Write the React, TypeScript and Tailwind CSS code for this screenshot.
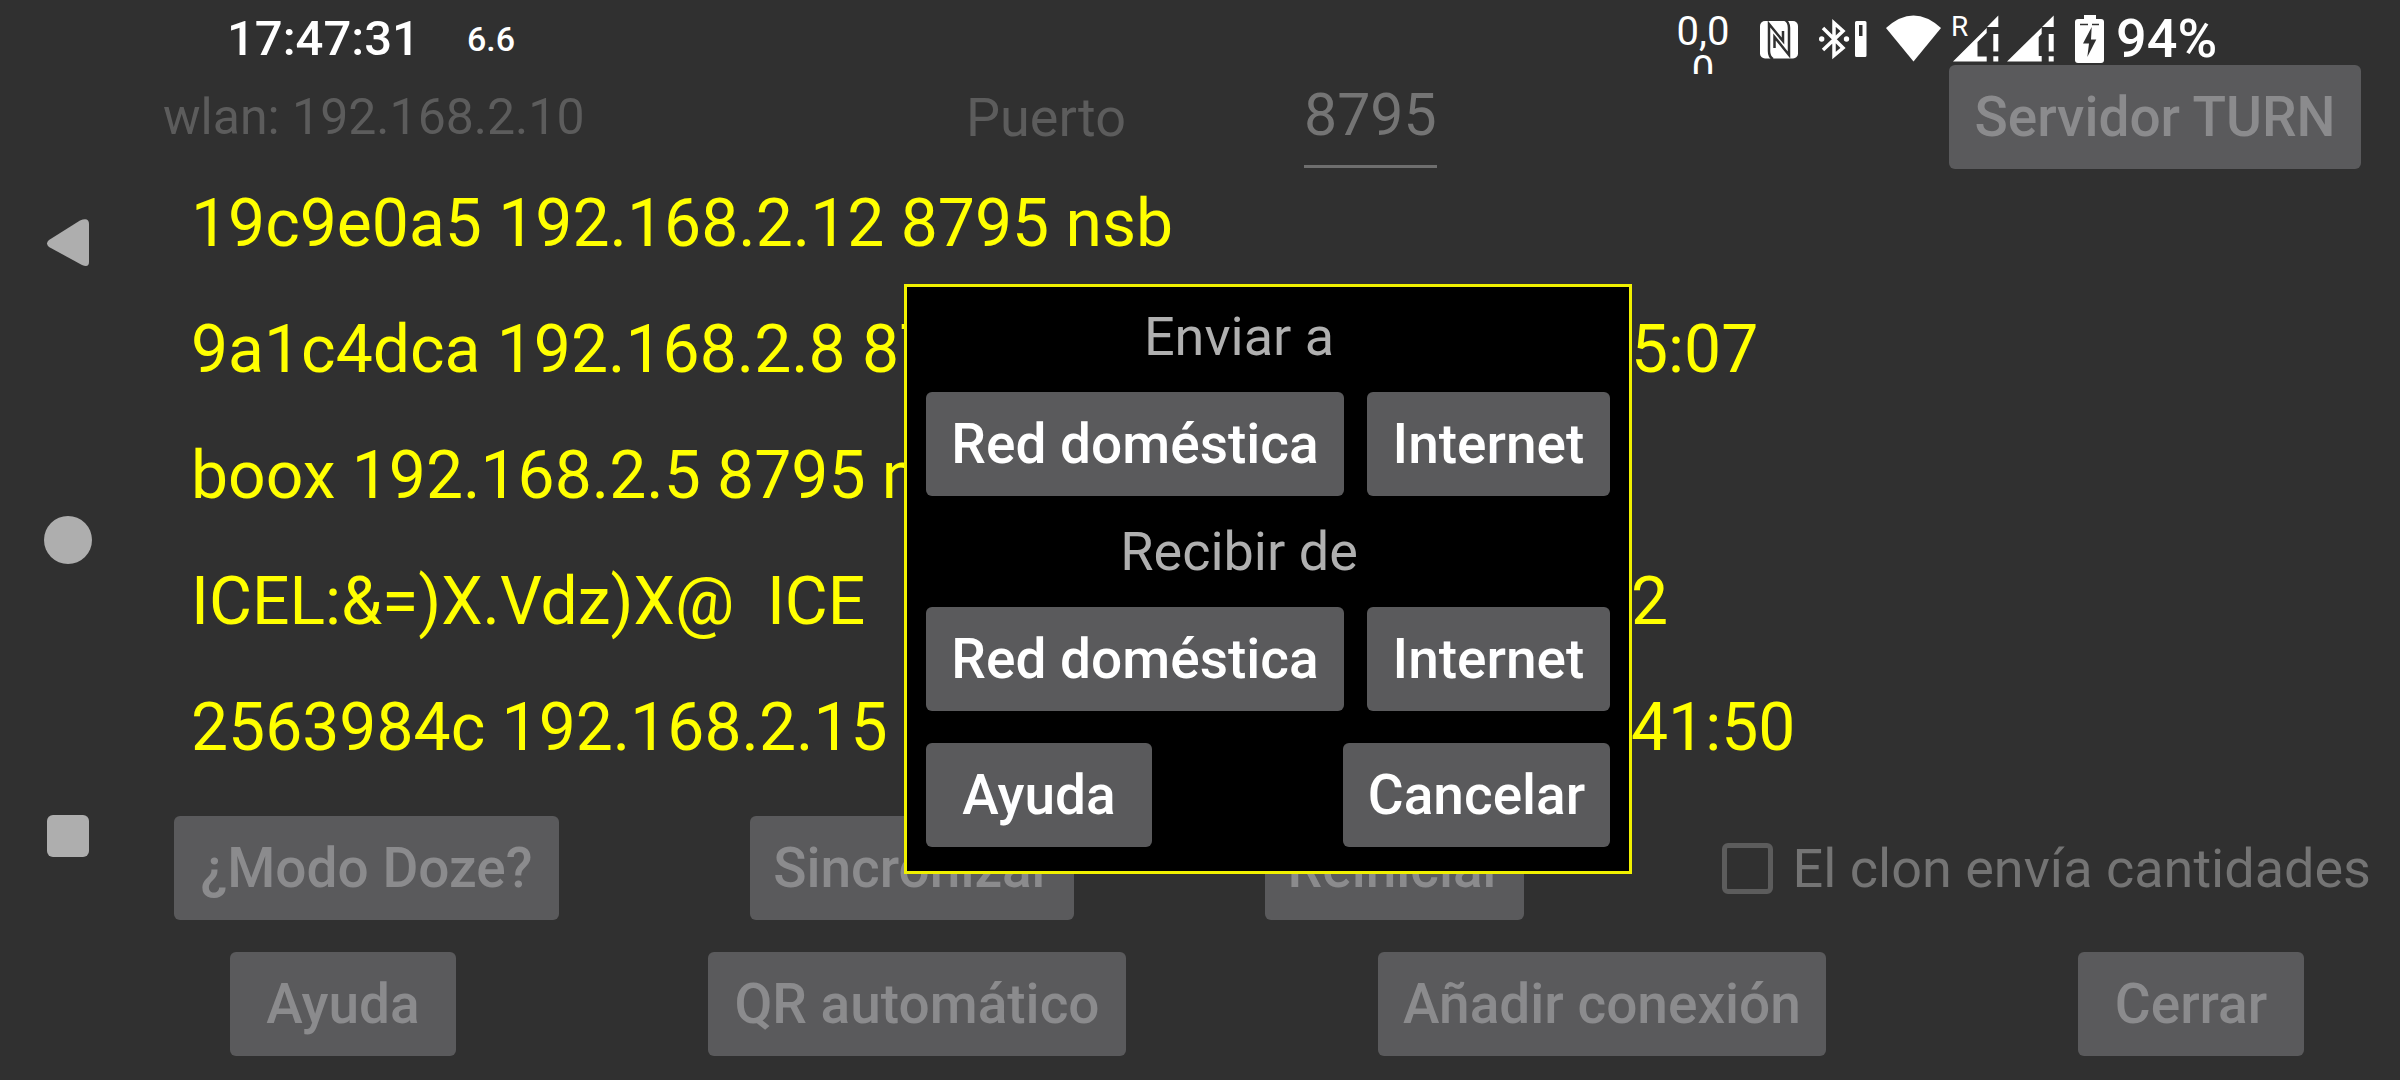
import type { ReactNode } from 'react'

interface ButtonProps {
  children: ReactNode
  className?: string
}

function MutedButton({ children, className = '' }: ButtonProps) {
  return (
    <button
      type="button"
      className={`h-[104px] shrink-0 rounded-md bg-[#5a5a5c] text-center text-[55px] font-medium whitespace-nowrap text-[#8b8b8d] ${className}`}
    >
      {children}
    </button>
  )
}

function DialogButton({ children, className = '' }: ButtonProps) {
  return (
    <button
      type="button"
      className={`h-[104px] shrink-0 rounded-md bg-[#5a5a5c] text-center text-[55px] font-medium whitespace-nowrap text-white ${className}`}
    >
      {children}
    </button>
  )
}

const hosts = [
  { name: '19c9e0a5 192.168.2.12 8795 nsb', time: '' },
  { name: '9a1c4dca 192.168.2.8 8795', time: '5:07' },
  { name: 'boox 192.168.2.5 8795 nsb', time: '' },
  { name: 'ICEL:&=)X.Vdz)X@  ICE', time: '2' },
  { name: '2563984c 192.168.2.15 8', time: '41:50' },
]

function NavigationBar() {
  return (
    <nav className="w-[136px] shrink-0">
      <div className="flex h-screen flex-col items-start justify-between pt-[216px] pb-[217px] pl-[44px]">
        <button type="button" aria-label="Atrás">
          <svg width="48" height="54" viewBox="0 0 48 54" fill="#aeaeae">
            <path d="M5 24 L36 4.500 Q45 1 45 8 V46 Q45 52 38 49 L5 31 Q1 27.500 5 24Z" />
          </svg>
        </button>
        <button type="button" aria-label="Inicio" className="my-[3px] size-[48px] rounded-full bg-[#aeaeae]" />
        <button type="button" aria-label="Recientes" className="my-[6px] ml-[3px] size-[42px] rounded-md bg-[#aeaeae]" />
      </div>
    </nav>
  )
}

function StatusIcons() {
  return (
    <>
      {/* NFC */}
      <svg className="ml-[28px] shrink-0" width="38" height="65" viewBox="0 0 38 65" fill="white">
        <rect y="21" width="38" height="37.500" rx="5" />
        <path
          d="M13 59 Q9 57 9 51 V24 L23 41 V31 M25 20 Q29 22 29 28 V55 L14.500 37 V48"
          fill="none"
          stroke="#303030"
          strokeWidth="2.500"
        />
      </svg>
      {/* Bluetooth with the battery of the device */}
      <svg className="ml-[21px] shrink-0" width="48" height="65" viewBox="0 0 48 65" fill="white">
        <path d="M4 28 L24 48 L15 55.500 V23 L24 31 L4 50" fill="none" stroke="white" strokeWidth="3.500" />
        <circle cx="2.700" cy="39" r="2.700" />
        <circle cx="27.500" cy="39" r="2.700" />
        <path fillRule="evenodd" d="M37.500 21 H46 Q47.500 21 47.500 22.500 V55.500 Q47.500 57 46 57 H37.500 Q36 57 36 55.500 V22.500 Q36 21 37.500 21Z M40 25 V36 H43.500 V25Z" />
      </svg>
      {/* Wi-Fi */}
      <svg className="ml-[19px] shrink-0" width="55" height="65" viewBox="0 0 55 65" fill="white">
        <path d="M0 28 Q27.500 3 55 28 L27.500 61.500Z" />
      </svg>
      {/* SIM 1, roaming */}
      <div className="relative ml-[10px] shrink-0">
        <span className="absolute top-[13px] left-0 text-[28px] leading-[28px] font-normal">R</span>
        <svg width="48" height="65" viewBox="0 0 48 65" fill="white">
          <path d="M2 61.500 L35.700 28 V33 L26.500 42 V56.500 H35.700 V61.500Z" />
          <path d="M36 27 L47.300 15.500 V27Z M42.300 34 H47.300 V51.500 H42.300Z M42.300 56.300 H47.300 V61.500 H42.300Z" />
        </svg>
      </div>
      {/* SIM 2 */}
      <svg className="ml-[8px] shrink-0" width="48" height="65" viewBox="0 0 48 65" fill="white">
        <path d="M0 61.500 L34.700 27.500 V34 L31.700 37 V56 H34.700 V61.500Z" />
        <path d="M35 27 L46.700 15.500 V27Z M41.700 34 H46.700 V51.500 H41.700Z M41.700 56.300 H46.700 V61.500 H41.700Z" />
      </svg>
      {/* Charging */}
      <svg className="ml-[20px] shrink-0" width="29" height="65" viewBox="0 0 29 65" fill="white">
        <rect y="19" width="29" height="44" rx="3" />
        <rect x="9" y="15" width="12" height="6" />
        <path d="M5 24.500 H13 M17 24.500 H24" stroke="#303030" strokeWidth="1.500" />
        <path d="M16.700 27 L8 43.500 H14 L12.300 57 L21.300 39.500 H16Z" fill="#303030" />
      </svg>
    </>
  )
}

export default function App() {
  return (
    <div className="flex min-h-screen bg-[#303030] font-[Roboto,sans-serif] text-[#5c5c5c]">
      <NavigationBar />
      <main className="relative flex min-w-0 flex-1 flex-col">
        <header className="flex h-[65px] items-start pr-[182px] pl-[91px] font-medium text-white">
          <time className="w-[240px] pt-[9px] text-[49px] leading-[60px]">17:47:31</time>
          <span className="pt-[9px] text-[34px] leading-[60px]">6.6</span>
          <div className="ml-auto flex items-start">
            {/* Second line of the counter is clipped by the bar */}
            <span className="h-[74px] w-[58px] overflow-hidden pt-[12px] text-center text-[40px] leading-[39px] font-normal">
              0,0 0
            </span>
            <StatusIcons />
            <span className="ml-[12px] w-[102px] pt-[9px] text-[54px] leading-[60px] font-medium">94%</span>
          </div>
        </header>

        {/* Connection settings */}
        <section className="grid h-[104px] grid-cols-[803fr_338fr_645fr_412fr] items-center pr-[39px] pl-[27px]">
          <span className="text-[50px]">wlan: 192.168.2.10</span>
          <label htmlFor="port" className="text-[54px]">Puerto</label>
          <input id="port" defaultValue="8795" className="h-[102px] w-[133px] border-b-3 border-[#6e6e6e] bg-transparent pb-[2px] text-[59px] text-[#747474] outline-none" />
          <MutedButton className="w-full">Servidor TURN</MutedButton>
        </section>

        <ul className="-mt-[9px] flex flex-col pl-[55px] text-[66px] text-[#ffff00]">
          {hosts.map((host) => (
            <li key={host.name} className="grid h-[126px] grid-cols-[1440px_1fr] items-center whitespace-pre">
              <span>{host.name}</span>
              <span>{host.time}</span>
            </li>
          ))}
        </ul>

        {/* Actions */}
        <div className="mt-[26px] flex items-center justify-between pr-[29px] pl-[38px]">
          <MutedButton className="w-[385px]">¿Modo Doze?</MutedButton>
          <MutedButton className="w-[324px]">Sincronizar</MutedButton>
          <MutedButton className="w-[259px]">Reiniciar</MutedButton>
          <label className="ml-[6px] flex items-center gap-[20px] text-[54px] whitespace-nowrap text-[#747474]">
            <input type="checkbox" className="size-[51px] appearance-none rounded-md border-5 border-[#5c5c5c]" />
            El clon envía cantidades
          </label>
        </div>
        <div className="mt-[32px] flex justify-between pr-[96px] pl-[94px]">
          <MutedButton className="w-[226px]">Ayuda</MutedButton>
          <MutedButton className="w-[418px]">QR automático</MutedButton>
          <MutedButton className="w-[448px]">Añadir conexión</MutedButton>
          <MutedButton className="w-[226px]">Cerrar</MutedButton>
        </div>

        <div role="dialog" className="absolute top-[284px] left-1/2 w-[728px] -translate-x-1/2 border-3 border-[#f0f000] bg-black px-[19px] pb-[24px]">
          <h2 className="flex h-[105px] items-center justify-center pr-[58px] pb-[6px] text-[54px] text-[#b0b0b0]">Enviar a</h2>
          <div className="flex justify-between">
            <DialogButton className="w-[418px]">Red doméstica</DialogButton>
            <DialogButton className="w-[243px]">Internet</DialogButton>
          </div>
          <h2 className="flex h-[111px] items-center justify-center pr-[58px] text-[54px] text-[#b0b0b0]">Recibir de</h2>
          <div className="flex justify-between">
            <DialogButton className="w-[418px]">Red doméstica</DialogButton>
            <DialogButton className="w-[243px]">Internet</DialogButton>
          </div>
          <div className="mt-[32px] flex justify-between">
            <DialogButton className="w-[226px]">Ayuda</DialogButton>
            <DialogButton className="w-[267px]">Cancelar</DialogButton>
          </div>
        </div>
      </main>
    </div>
  )
}
